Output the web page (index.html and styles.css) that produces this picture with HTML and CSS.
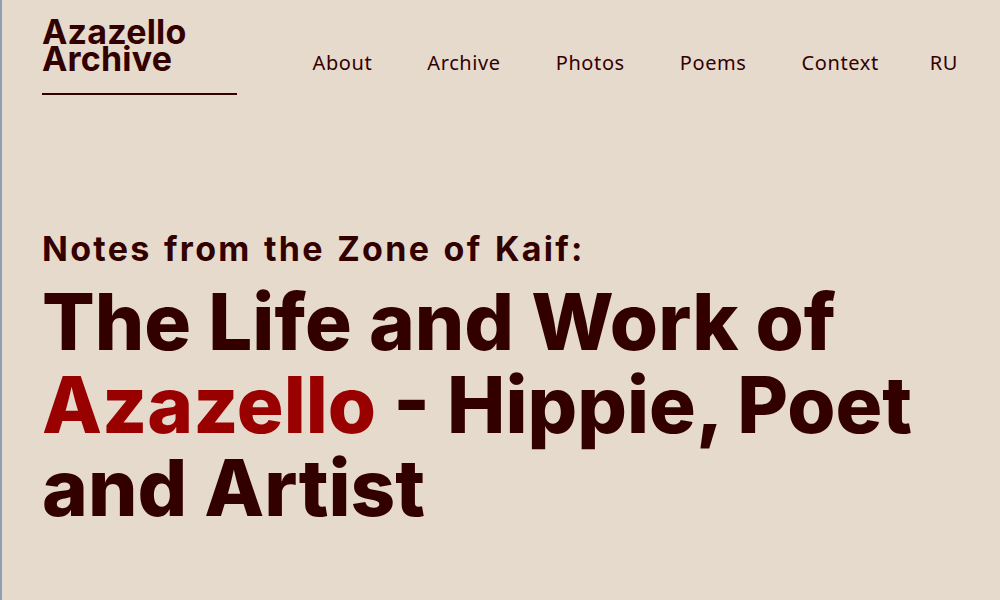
FILE: index.html
```html
<!DOCTYPE html>
<html lang="en">
<head>
<meta charset="utf-8">
<title>Azazello Archive</title>
<link rel="stylesheet" href="styles.css">
</head>
<body>
<div class="page">
  <header class="header">
    <div class="logo">
      <a class="logo-text" href="#">Azazello<br>Archive</a>
      <div class="logo-rule"></div>
    </div>
    <nav class="nav">
      <a href="#">About</a>
      <a href="#">Archive</a>
      <a href="#">Photos</a>
      <a href="#">Poems</a>
      <a href="#">Context</a>
      <a href="#" class="lang">RU</a>
    </nav>
  </header>
  <main class="hero">
    <h2 class="kicker">Notes from the Zone of Kaif:</h2>
    <h1 class="title">The Life and Work of <span class="accent">Azazello</span> - Hippie, Poet and Artist</h1>
  </main>
</div>
</body>
</html>
```
FILE: styles.css
```css
html, body {
  margin: 0;
  padding: 0;
  background: #e6dacd;
}
body {
  color: #330000;
  font-family: Inter, "Liberation Sans", sans-serif;
  height: 600px;
  overflow: hidden;
}
.page {
  height: 600px;
  box-sizing: border-box;
  border-left: 2px solid #8aa0b0;
  padding: 0 42px 0 40px;
}
.header {
  display: flex;
  justify-content: space-between;
  align-items: flex-start;
  padding-top: 18px;
}
.logo {
  width: 195px;
}
.logo-text {
  display: block;
  color: #330000;
  text-decoration: none;
  font-weight: 700;
  font-size: 34px;
  line-height: 27px;
  letter-spacing: 0.2px;
}
.logo-rule {
  margin-top: 21px;
  height: 2px;
  background: #330000;
}
.nav {
  display: flex;
  gap: 55px;
  padding-top: 33px;
}
.nav a {
  color: #330000;
  text-decoration: none;
  font-family: "Noto Sans", "Open Sans", sans-serif;
  font-size: 20px;
  line-height: 24px;
  letter-spacing: 0.6px;
}
.nav .lang {
  margin-left: -4px;
}
.hero {
  padding-top: 134px;
}
.kicker {
  margin: 0;
  font-size: 34px;
  line-height: 40px;
  font-weight: 700;
  letter-spacing: 2.3px;
  word-spacing: 2px;
}
.title {
  margin: 11px 0 0;
  font-size: 78px;
  line-height: 83px;
  font-weight: 800;
  letter-spacing: 0;
  width: 900px;
}
.accent {
  color: #990000;
}
```
